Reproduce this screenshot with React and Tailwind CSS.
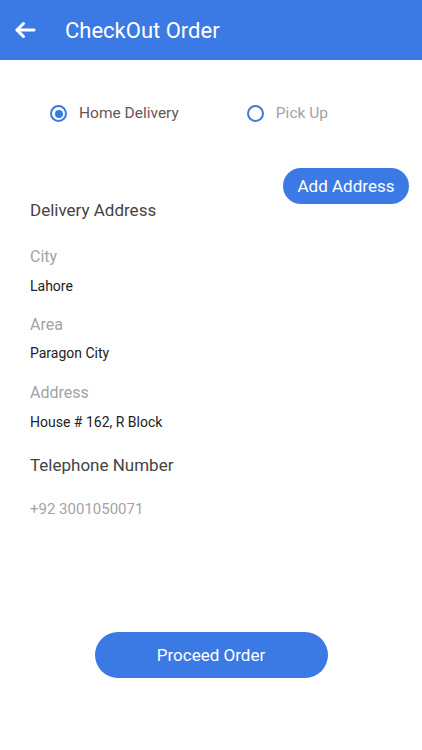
export default function App() {
  const font = { fontFamily: '"Roboto", "Noto Sans", sans-serif' };

  return (
    <div className="min-h-[750px] w-[422px] bg-white" style={font}>
      <header className="flex h-[60px] items-center bg-[#3b7ae4] pl-[14px]">
        <svg width="22" height="18" viewBox="0 0 22 18" fill="none" stroke="white" strokeWidth="3" strokeLinecap="round" strokeLinejoin="round">
          <path d="M20 9H3" />
          <path d="M9.5 2.5L3 9l6.5 6.5" />
        </svg>
        <h1 className="ml-[29px] text-[22px] text-white">CheckOut Order</h1>
      </header>

      <div className="mt-[42px] flex items-center pl-[50px]">
        <label className="flex items-center">
          <span className="flex h-[17px] w-[17px] items-center justify-center rounded-full border-2 border-[#3b7ae4]">
            <span className="h-[8px] w-[8px] rounded-full bg-[#3b7ae4]" />
          </span>
          <span className="ml-[12px] text-[15.5px] text-[#6b5555]">Home Delivery</span>
        </label>
        <label className="ml-[68px] flex items-center">
          <span className="h-[17px] w-[17px] rounded-full border-2 border-[#3b7ae4]" />
          <span className="ml-[12px] text-[15.5px] text-[#a3a3a3]">Pick Up</span>
        </label>
      </div>

      <div className="mt-[43px] flex justify-end pr-[13px]">
        <button className="h-[36px] w-[126px] rounded-full bg-[#3b7ae4] text-[17px] text-white">Add Address</button>
      </div>

      <div className="-mt-[6px] pl-[30px]">
        <h2 className="text-[17px] leading-[24px] text-[#444]">Delivery Address</h2>

        <p className="mt-[24px] text-[16px] leading-[22px] text-[#a3a3a3]">City</p>
        <p className="mt-[8px] text-[14px] leading-[20px] text-[#222]">Lahore</p>

        <p className="mt-[18px] text-[16px] leading-[22px] text-[#a3a3a3]">Area</p>
        <p className="mt-[7px] text-[14px] leading-[20px] text-[#222]">Paragon City</p>

        <p className="mt-[19px] text-[16px] leading-[22px] text-[#a3a3a3]">Address</p>
        <p className="mt-[8px] text-[14px] leading-[20px] text-[#222]">House # 162, R Block</p>

        <h2 className="mt-[21px] text-[17px] leading-[24px] text-[#444]">Telephone Number</h2>
        <p className="mt-[22px] text-[15px] leading-[20px] text-[#a3a3a3]">+92 3001050071</p>
      </div>

      <div className="mt-[113px] flex justify-center">
        <button className="h-[46px] w-[233px] rounded-full bg-[#3b7ae4] text-[17px] text-white">Proceed Order</button>
      </div>
    </div>
  );
}
